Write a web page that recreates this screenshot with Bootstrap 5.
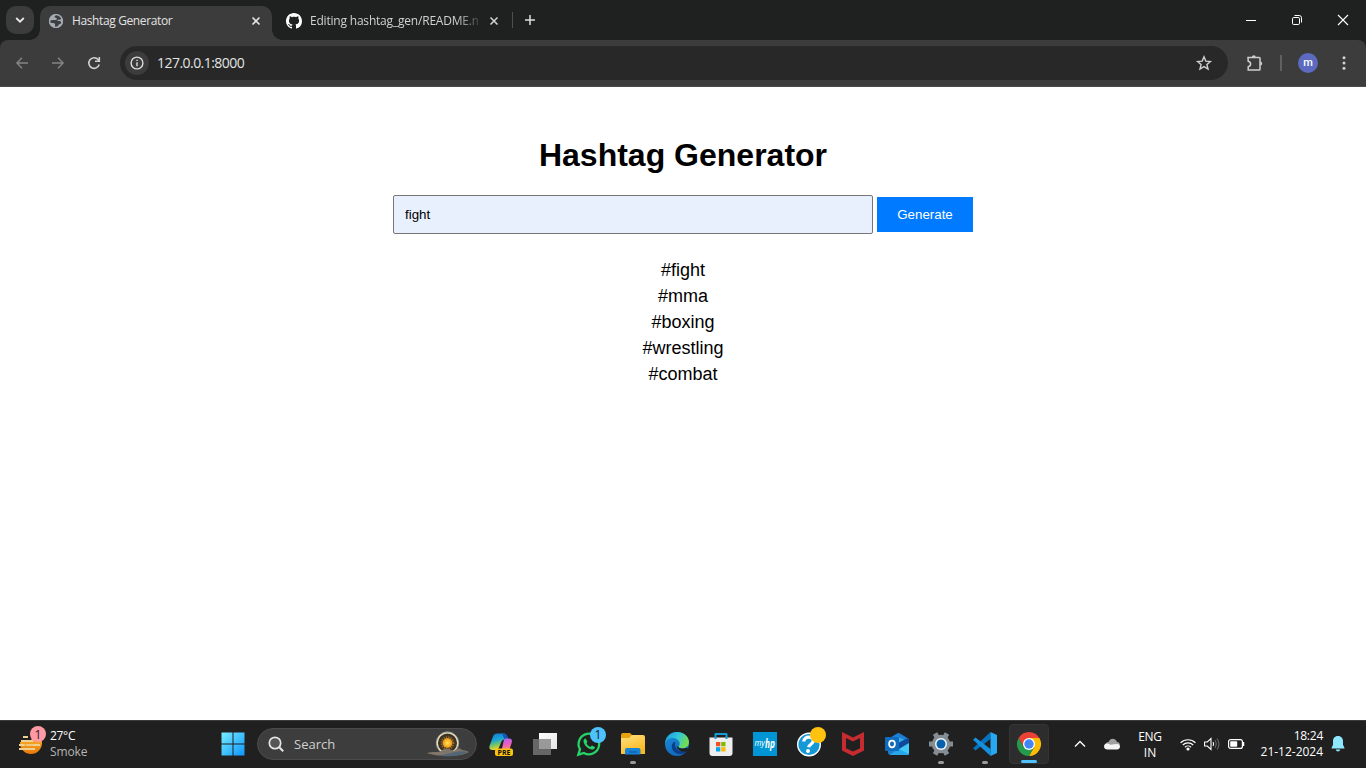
<!DOCTYPE html>
<html lang="en">
<head>
<meta charset="utf-8">
<meta name="viewport" content="width=device-width, initial-scale=1">
<title>Hashtag Generator</title>
<link href="https://cdn.jsdelivr.net/npm/bootstrap@5.3.0/dist/css/bootstrap.min.css" rel="stylesheet">
<style>
  body { width: 1366px; height: 768px; overflow: hidden; background: #fff; font-family: "Open Sans", "Noto Sans", sans-serif; }
  svg { display: block; flex: none; overflow: visible; }
  /* browser chrome */
  .tabstrip { height: 40px; background: #1f2120; color: #e3e3e3; font-size: 12px; padding-left: 6px; }
  .tab-menu { width: 28px; height: 28px; border-radius: 10px; background: #3c3c3c; margin: 6px 6px 0 0; }
  .tab-item { height: 34px; margin-top: 6px; width: 232px; padding: 0 8px 5px 8px; }
  .tab-active { background: #3c3c3c; border-radius: 10px 10px 0 0; }
  .tab-active::before, .tab-active::after { content: ""; position: absolute; bottom: 0; width: 10px; height: 10px; }
  .tab-active::before { left: -10px; background: radial-gradient(circle at 0 0, transparent 9.5px, #3c3c3c 10px); }
  .tab-active::after { right: -10px; background: radial-gradient(circle at 100% 0, transparent 9.5px, #3c3c3c 10px); }
  .tab-title { white-space: nowrap; overflow: hidden; letter-spacing: -.38px; line-height: 18px; }
  .tab-fade { width: 168px; color: #d0d0d0; letter-spacing: -.2px; -webkit-mask-image: linear-gradient(90deg, #000 146px, transparent 174px); mask-image: linear-gradient(90deg, #000 146px, transparent 174px); }
  .tab-rule { width: 1px; height: 16px; background: #4d4f4e; }
  .win-btn { width: 46px; }
  .strip-bg { background: #1f2120; }
  .toolbar { height: 47px; background: #3c3c3c; border-radius: 8px 8px 0 0; border-bottom: 1px solid #4b4b4b; }
  .tool-btn { width: 36px; height: 46px; }
  .omnibox { width: 1108px; height: 34px; border-radius: 17px; background: #282828; color: #e3e3e3; font-size: 14px; padding: 0 16px 0 5px; }
  .info-dot { width: 24px; height: 24px; border-radius: 50%; background: #3c3c3c; }
  .url { letter-spacing: -.54px; margin-left: 8px; padding-bottom: 2px; }
  .avatar { width: 20px; height: 20px; border-radius: 50%; background: #5c6bc0; color: #fff; font: 500 11px/20px Roboto, sans-serif; }
  /* page */
  .page { height: 633px; font-family: "Liberation Sans", Arial, sans-serif; color: #000; padding-top: 50px; }
  .page h1 { font-size: 32px; font-weight: 700; line-height: 37px; margin: 0 0 21px; }
  .keyword { width: 480px; height: 39px; padding: 10px 11px; border: 1px solid #767676; border-radius: 2px; background: #e8f0fe; color: #000; font-size: 13.333px; line-height: 17px; }
  .generate { width: 96px; height: 35px; border: 0; border-radius: 0; background: #007bff; color: #fff; font-size: 13.333px; line-height: 15px; padding: 10px 0; }
  .tags { font-size: 18px; line-height: 26px; margin: 23px 0 0; }
  /* taskbar */
  .taskbar { height: 48px; background: #202020; border-top: 1px solid #3b3b3b; padding-bottom: 1px; color: #fff; font-size: 12px; line-height: 16px; }
  .weather { width: 210px; padding-left: 17px; }
  .app { width: 44px; height: 46px; flex: none; }
  .app-open { width: 40px; height: 40px; margin: 0 2px; background: #2d2d2d; border: 1px solid #343434; border-radius: 4px; }
  .run-mark { left: 50%; bottom: 3px; width: 6px; height: 3px; margin-left: -3px; border-radius: 2px; background: #9a9a9a; }
  .app-open .run-mark { width: 16px; margin-left: -8px; bottom: 0; background: #4cc2ff; }
  .search { width: 220px; height: 32px; margin: 0 2px 0 3px; border-radius: 16px; background: #3d3d3d; border: 1px solid #4b4b4b; color: #d0d0d0; font-size: 13px; padding: 0 6px 0 10px; }
  .tray { width: 315px; }
</style>
</head>
<body class="d-flex flex-column m-0">

<header class="strip-bg">
  <div class="tabstrip d-flex">
    <div class="tab-menu d-flex align-items-center justify-content-center"><svg width="10" height="6" viewBox="0 0 10 6" fill="none" stroke="#e8e8e8" stroke-width="1.8"><path d="M1.2 1 5 4.7 8.8 1"/></svg></div>
    <div class="tab-item tab-active position-relative d-flex align-items-center">
      <svg width="16" height="16" viewBox="0 0 16 16"><circle cx="8" cy="8" r="7" fill="#a5abb2"/><path d="M9.500 1.500C8 2 6.300 2.800 6.600 4c.4 1 1.900.4 2.200 1.500.3 1.300-.9 1.700-2.300 1.600C4.500 7 3 7.200 1.700 7.800c.2 1 .4 1.700.8 2.200 1.500.3 2.300-.2 3.500.2 1.300.4 1.300 1.400 1 2.200-.2.700.1 1.300.4 2 2-.2 2.800-1.300 3.200-2.600.4-1 2.600-.6 2.700-2 .1-1.300-1.300-1.800-2.600-1.700-1 .1-1.600-.3-1.200-1 .5-.8 2.500.2 3.900-1.400C12.700 3.500 11.500 2 9.500 1.500z" fill="#3c3f42"/><circle cx="8" cy="8" r="6.400" fill="none" stroke="#a5abb2" stroke-width="1.400"/></svg>
      <span class="tab-title ms-2 flex-grow-1">Hashtag Generator</span>
      <svg class="me-1" width="8" height="8" viewBox="0 0 8 8" stroke="#e3e3e3" stroke-width="1.600"><path d="M.5.5l7 7M7.500.5l-7 7"/></svg>
    </div>
    <div class="tab-item d-flex align-items-center ms-2">
      <svg style="margin-left:-2px" width="16" height="16" viewBox="0 0 16 16" fill="#fff"><path d="M8 0C3.580 0 0 3.580 0 8c0 3.540 2.290 6.530 5.470 7.590.4.070.55-.17.55-.38 0-.19-.01-.82-.01-1.490-2.010.37-2.530-.49-2.690-.94-.09-.23-.48-.94-.82-1.130-.28-.15-.68-.52-.01-.53.63-.01 1.080.58 1.230.82.72 1.210 1.870.87 2.330.66.070-.52.28-.87.51-1.070-1.780-.2-3.640-.89-3.640-3.950 0-.87.31-1.590.82-2.150-.08-.2-.36-1.020.08-2.120 0 0 .67-.21 2.200.82.64-.18 1.320-.27 2-.27s1.360.09 2 .27c1.530-1.040 2.200-.82 2.200-.82.44 1.100.16 1.920.08 2.120.51.56.82 1.270.82 2.150 0 3.070-1.870 3.750-3.650 3.950.29.25.54.73.54 1.480 0 1.070-.01 1.930-.01 2.200 0 .21.15.46.55.38A8.010 8.010 0 0 0 16 8c0-4.420-3.580-8-8-8z"/></svg>
      <span class="tab-title tab-fade ms-2 flex-shrink-0">Editing hashtag_gen/README.md</span>
      <svg style="margin-left:12px" width="8" height="8" viewBox="0 0 8 8" stroke="#d5d5d5" stroke-width="1.500"><path d="M.5.5l7 7M7.500.5l-7 7"/></svg>
    </div>
    <div class="d-flex align-items-center">
      <div class="tab-rule"></div>
      <svg style="margin-left:12px" width="10" height="10" viewBox="0 0 10 10" stroke="#dedede" stroke-width="1.500"><path d="M5 0v10M0 5h10"/></svg>
    </div>
    <div class="d-flex ms-auto">
      <div class="win-btn d-flex align-items-center justify-content-center"><svg width="10" height="10" viewBox="0 0 10 10" stroke="#fff"><path d="M0 5.500h10"/></svg></div>
      <div class="win-btn d-flex align-items-center justify-content-center"><svg width="10" height="10" viewBox="0 0 10 10" fill="none" stroke="#fff"><rect x=".5" y="2.500" width="7" height="7" rx="1.300"/><path d="M2.500.5h4.700a2.300 2.300 0 0 1 2.300 2.300v4.700"/></svg></div>
      <div class="win-btn d-flex align-items-center justify-content-center"><svg width="10" height="10" viewBox="0 0 10 10" stroke="#fff" stroke-width="1.100"><path d="M0 0l10 10M10 0 0 10"/></svg></div>
    </div>
  </div>
  <div class="toolbar d-flex align-items-center">
    <div class="d-flex" style="padding-left:4px;width:120px">
      <div class="tool-btn d-flex align-items-center justify-content-center"><svg width="12" height="12" viewBox="0 0 12 12" fill="none" stroke="#858585" stroke-width="1.400"><path d="M12 6H1M6 .7.9 6 6 11.300"/></svg></div>
      <div class="tool-btn d-flex align-items-center justify-content-center"><svg width="12" height="12" viewBox="0 0 12 12" fill="none" stroke="#858585" stroke-width="1.400"><path d="M0 6h11M6 .7 11.100 6 6 11.300"/></svg></div>
      <div class="tool-btn d-flex align-items-center justify-content-center"><svg width="12" height="12" viewBox="0 0 12 12" fill="none" stroke="#d2d2d2" stroke-width="1.600"><path d="M11.200 7.500A5.300 5.300 0 1 1 10.100 2.500L11 3.600"/><path d="M11.300 0v4.300H7"/></svg></div>
    </div>
    <div class="omnibox d-flex align-items-center">
      <div class="info-dot d-flex align-items-center justify-content-center"><svg width="14" height="14" viewBox="0 0 14 14" fill="none" stroke="#dcdcdc" stroke-width="1.400"><circle cx="7" cy="7" r="5.900"/><path d="M7 6.200v4M7 3.700v1.400"/></svg></div>
      <span class="url flex-grow-1">127.0.0.1:8000</span>
      <svg width="16" height="16" viewBox="0 0 16 16" fill="none" stroke="#cfcfcf" stroke-width="1.400"><path d="M8 1.800l1.800 4.300 4.600.4-3.500 3 1.100 4.500L8 11.600 4 14l1.100-4.500-3.500-3 4.600-.4z"/></svg>
    </div>
    <svg style="margin-left:18px" width="18" height="18" viewBox="0 0 18 18" fill="none" stroke="#cfcfcf" stroke-width="1.500"><path d="M2 3.500h11.200q.8 0 .8.800v11q0 .8-.8.800H2.200v-3.300c3.200-.8 3.200-4.800 0-5.600z"/><path d="M5.900 3.200a1.900 1.900 0 0 1 3.800 0zM14.300 7.600a1.900 1.900 0 0 1 0 3.800z" fill="#cfcfcf" stroke="none"/></svg>
    <div style="width:2px;height:16px;margin-left:16px;background:#606060"></div>
    <div class="avatar text-center" style="margin-left:16px">m</div>
    <svg style="margin-left:24px" width="4" height="14" viewBox="0 0 4 14" fill="#d2d2d2"><circle cx="2" cy="1.700" r="1.500"/><circle cx="2" cy="7" r="1.500"/><circle cx="2" cy="12.300" r="1.500"/></svg>
  </div>
</header>

<main class="page text-center">
  <h1>Hashtag Generator</h1>
  <form class="d-flex align-items-center justify-content-center gap-1" onsubmit="return false">
    <input class="keyword" type="text" value="fight" aria-label="Keyword">
    <button class="btn generate" type="submit">Generate</button>
  </form>
  <ul class="tags list-unstyled">
    <li>#fight</li><li>#mma</li><li>#boxing</li><li>#wrestling</li><li>#combat</li>
  </ul>
</main>

<footer class="taskbar d-flex align-items-center">
  <div class="weather d-flex align-items-center">
    <svg width="30" height="32" viewBox="0 0 30 32"><defs><linearGradient id="sun" x2="0" y2="1"><stop stop-color="#ffc53d"/><stop offset="1" stop-color="#e87808"/></linearGradient></defs><circle cx="14" cy="15" r="11" fill="url(#sun)"/><path d="M0 2h14.500v12H0z" fill="#202020"/><g stroke="#edd092" stroke-width="2"><path d="M6 9h5M4 13h12M9 17h14M2 17h6M2 21h16"/></g><path d="M7 17h9" stroke="#f4bd5c" stroke-width="1"/><circle cx="21" cy="6" r="8" fill="#ff99a4"/><text x="21" y="10.500" text-anchor="middle" font-size="12" fill="#222">1</text></svg>
    <div style="margin-left:3px"><div style="letter-spacing:-.3px">27°C</div><div style="color:#b5b5b5;letter-spacing:-.1px">Smoke</div></div>
  </div>
  <div class="app d-flex align-items-center justify-content-center"><svg style="margin-left:1px" width="24" height="24" viewBox="0 0 24 24"><defs><linearGradient id="win" x1="0" y1="0" x2="24" y2="24" gradientUnits="userSpaceOnUse"><stop stop-color="#7aefff"/><stop offset="1" stop-color="#0a94ff"/></linearGradient></defs><path fill="url(#win)" d="M.5.5h11v11H.5zM12.500.5h11v11h-11zM.5 12.500h11v11H.5zM12.500 12.500h11v11h-11z"/></svg></div>
  <div class="search d-flex align-items-center">
    <svg width="16" height="16" viewBox="0 0 16 16" fill="none" stroke="#e5e5e5" stroke-width="1.700"><circle cx="7" cy="7" r="5.700" fill="#555"/><path d="M11.200 11.200l4 4" stroke-width="2"/></svg>
    <span style="margin-left:10px" class="flex-grow-1">Search</span>
    <svg width="44" height="26" viewBox="0 0 44 26"><defs><radialGradient id="glow"><stop stop-color="#ffe25a"/><stop offset=".6" stop-color="#fbb62a"/><stop offset="1" stop-color="#e08a18"/></radialGradient></defs><circle cx="21.500" cy="12" r="11.200" fill="#3b3529" stroke="#8fb4cc" stroke-width=".8"/><circle cx="21.500" cy="12" r="10.200" fill="none" stroke="#f3dcb0" stroke-width="1.300"/><circle cx="21.500" cy="12" r="6" fill="none" stroke="#a8701f" stroke-width="1.600" stroke-dasharray="1.200 1.160"/><circle cx="21.500" cy="12" r="5" fill="url(#glow)"/><path d="M1 22c6-2 10 0 14-2 4-4 9-2 13 0 4-3 6-3 8-1 3 0 5 1 7 2-8 5-32 5-42 1z" fill="#7f7568"/><path d="M15 25c4-3 9-2 14-4 4-1 9-1 13 0-6 4-16 5-27 4z" fill="#536675"/></svg>
  </div>
  <div class="app d-flex align-items-center justify-content-center"><svg width="24" height="24" viewBox="0 0 24 24"><defs><linearGradient id="copA" x2=".3" y2="1"><stop stop-color="#1675d8"/><stop offset=".45" stop-color="#18a5d5"/><stop offset=".75" stop-color="#83c75d"/><stop offset="1" stop-color="#f5d22f"/></linearGradient><linearGradient id="copB" x2=".2" y2="1"><stop stop-color="#a46bff"/><stop offset=".5" stop-color="#e65bc4"/><stop offset="1" stop-color="#ff8b69"/></linearGradient></defs><path d="M8 1.500h7q2 0 3 3l1 3h-4q-2 0-3 3l-2 5q-1 2.500-4 2.500H3.500q-4 0-3-4L4 4.500q1-3 4-3z" fill="url(#copA)"/><path d="M13 1.500h2.500q2 0 3 3l1 3h-4z" fill="#1656ba"/><path d="M16.500 6.500h4q3 0 2.300 4l-2 6q-1 3-4 3H9q3 0 4-3l1.500-7q.5-3 2-3z" fill="url(#copB)"/><rect x="6" y="16.500" width="18" height="7.500" rx="2" fill="#ffc20d"/><text x="15" y="23" text-anchor="middle" font-size="7" font-weight="700" fill="#111">PRE</text></svg></div>
  <div class="app d-flex align-items-center justify-content-center"><svg width="24" height="24" viewBox="0 0 24 24"><defs><linearGradient id="tv" x2="1" y2="1"><stop stop-color="#fff"/><stop offset="1" stop-color="#e4e4e4"/></linearGradient></defs><path d="M6 1h18v16H6z" fill="url(#tv)"/><path d="M0 7h18v16H0z" fill="#666"/><path d="M6 7h12v10H6z" fill="#999"/></svg></div>
  <div class="app d-flex align-items-center justify-content-center"><svg width="24" height="24" viewBox="0 0 24 24"><path d="M1.300 22.700 3 17.200A10.300 10.300 0 1 1 6.900 21z" fill="#202020" stroke="#25d366" stroke-width="2.300"/><path d="M8.500 6.500c-.6-.2-2 .8-2 2.600 0 4.200 5.200 8.600 8.800 8.400 1.800-.1 3-1.500 2.600-2.600l-3-1.500-1.400 1.500c-1.800-.7-3.200-2-4-3.700l1-1.400z" fill="#25d366"/><circle cx="21" cy="3" r="8" fill="#4cc2ff"/><text x="21" y="7.300" text-anchor="middle" font-size="12" fill="#202020">1</text></svg></div>
  <div class="app position-relative d-flex align-items-center justify-content-center"><svg width="24" height="24" viewBox="0 0 24 24"><defs><linearGradient id="fold" x2=".5" y2="1"><stop stop-color="#ffe082"/><stop offset="1" stop-color="#f8b91f"/></linearGradient></defs><path d="M0 3q0-2 2-2h7l2 2v4H0z" fill="#e6a30c"/><path d="M0 6h8l3-3h11q2 0 2 2v17H0z" fill="url(#fold)"/><path d="M4 22.500V18q0-2 2-2h11.500q2 0 2 2v4.500z" fill="#1683d8"/><path d="M8 20h8" stroke="#0f62ae" stroke-width="1.400"/></svg><i class="run-mark position-absolute"></i></div>
  <div class="app d-flex align-items-center justify-content-center"><svg width="24" height="24" viewBox="0 0 24 24"><defs><linearGradient id="edgeA" x2="1" y2=".4"><stop stop-color="#1894db"/><stop offset=".55" stop-color="#2fc6dc"/><stop offset="1" stop-color="#72dc55"/></linearGradient><linearGradient id="edgeB" x2=".5" y2="1"><stop stop-color="#1b8fdb"/><stop offset="1" stop-color="#1267bd"/></linearGradient></defs><circle cx="12" cy="12" r="12" fill="url(#edgeB)"/><path d="M0 11C.8 4.500 5.700 0 12 0c7 0 12 4.600 12 10 0 4-3 6.300-6.500 6.300-2 0-4-.5-4-1.500 0-.8 1.200-1.500 1.200-3.300C14.700 8.500 11.500 6 8 6c-3.500 0-7 2-8 5z" fill="url(#edgeA)"/><path d="M9 10c-3 2-3 7 .5 10 3 2.500 8 2.600 12 .2.600-.3 1.300-1.300.6-1.600-4 1.800-8.600 1-10.700-2C9.800 14.600 9.500 12 10.500 10z" fill="#0a3e86"/><path d="M14 15.500c1 1.200 5.500 1.300 8 .2l1.600 1.500-1.600 2C18 21 13 19 11.500 14z" fill="#202020"/></svg></div>
  <div class="app d-flex align-items-center justify-content-center"><svg width="24" height="24" viewBox="0 0 24 24"><path d="M.5 5.500h23V21q0 3-3 3h-17q-3 0-3-3z" fill="#eee"/><path d="M6.500 7V2h11v5" fill="none" stroke="#159bd7" stroke-width="2" stroke-linejoin="round"/><path fill="#f25022" d="M7 10h4.300v4.300H7z"/><path fill="#7fba00" d="M12.200 10h4.300v4.300h-4.300z"/><path fill="#00a4ef" d="M7 15.200h4.300v4.300H7z"/><path fill="#ffb900" d="M12.200 15.200h4.300v4.300h-4.300z"/></svg></div>
  <div class="app d-flex align-items-center justify-content-center"><svg width="24" height="24" viewBox="0 0 24 24"><path fill="#0096d6" d="M0 0h24v24H0z"/><text x="1.500" y="14.300" font-size="8.500" font-style="italic" fill="#fff" textLength="10.500" lengthAdjust="spacingAndGlyphs">my</text><text x="12" y="15.500" font-size="13" font-weight="700" font-style="italic" fill="#fff" textLength="10" lengthAdjust="spacingAndGlyphs">hp</text></svg></div>
  <div class="app d-flex align-items-center justify-content-center"><svg width="24" height="24" viewBox="0 0 24 24"><circle cx="12" cy="12.500" r="11.300" fill="#1499d6" stroke="#fff" stroke-width="1.400"/><path d="M6.800 9.500c.2-6 9.800-5.700 9.400-.4-.2 3-4.200 3.100-4.600 6.200" fill="none" stroke="#fff" stroke-width="3.200"/><circle cx="11" cy="19" r="2" fill="#fff"/><circle cx="21" cy="3" r="8" fill="#ffc20f"/></svg></div>
  <div class="app d-flex align-items-center justify-content-center"><svg width="24" height="24" viewBox="0 0 24 24"><path d="M1 0l11 5.500L23 0v18.500L12 24 1 18.500zM5 6v10.200L12 19.600l7-3.400V6L12 9.500z" fill="#c52b2f" fill-rule="evenodd"/></svg></div>
  <div class="app d-flex align-items-center justify-content-center"><svg width="24" height="24" viewBox="0 0 24 24"><path d="M3 7 12 1.500q1.500-1 3 0L24 7v14q0 2-2 2H6q-3 0-3-3z" fill="#1b7fd4"/><path d="M12 4.500l7 3-6 6z" fill="#39a9ee"/><path d="M14 10.500 23 6l1 1v5l-10 6z" fill="#0d4a9c"/><path d="M24 11v10q0 2-2 2H5l9-6z" fill="#42c8f5"/><path d="M5 23l9-6 9.500 5q-.7 1-1.500 1z" fill="#28a8ea"/><rect y="5" width="14" height="14" rx="1" fill="#0f6cbd"/><ellipse cx="7" cy="12" rx="2.900" ry="3.300" fill="none" stroke="#fff" stroke-width="1.700"/></svg></div>
  <div class="app position-relative d-flex align-items-center justify-content-center"><svg width="24" height="24" viewBox="0 0 24 24"><circle cx="12" cy="12" r="9.200" fill="#858d94"/><g stroke="#858d94" stroke-width="5"><path d="M6 1.600 18 22.400M18 1.600 6 22.400M0 12h24"/></g><circle cx="12" cy="12" r="6" fill="#f3f6f8"/><circle cx="12" cy="12" r="4.500" fill="#0861ad"/></svg><i class="run-mark position-absolute"></i></div>
  <div class="app position-relative d-flex align-items-center justify-content-center"><svg width="24" height="24" viewBox="0 0 24 24"><path d="M0 16.200 17.500 0v7L2.500 18.500z" fill="#0873bd"/><path d="M0 7.800 2.500 5.500 17.500 17v7z" fill="#1590df"/><path d="M17.500 0 24 3v18l-6.500 3z" fill="#29a8f2"/></svg><i class="run-mark position-absolute"></i></div>
  <div class="app app-open position-relative d-flex align-items-center justify-content-center"><svg width="24" height="24" viewBox="0 0 24 24"><path d="M12 12V6h10.400A12 12 0 0 1 12 24l5.200-9z" fill="#fbbc04"/><path d="M12 12l-5.200 3L1.600 6A12 12 0 0 0 12 24l5.200-9z" fill="#249b4c"/><path d="M12 6h10.400A12 12 0 0 0 1.600 6l5.200 9z" fill="#ea4335"/><circle cx="12" cy="12" r="6" fill="#fff"/><circle cx="12" cy="12" r="4.700" fill="#4285f4"/></svg><i class="run-mark position-absolute"></i></div>
  <div class="tray d-flex align-items-center">
    <svg style="margin-left:23px" width="12" height="8" viewBox="0 0 12 8" fill="none" stroke="#fff" stroke-width="1.400"><path d="M1 6.500l5-5 5 5"/></svg>
    <svg style="margin-left:18px" width="16" height="12" viewBox="0 0 16 12"><path d="M1 8c0-3 2-4 3.500-4C6-.5 11.500-.5 13 4c2 .2 3 1.600 3 3.500L9 10z" fill="#a0a0a0"/><path d="M0 8.500c0-2 1.500-3 3-3 1.500 0 2.500.8 3.200 1.200L13 6c2 .2 3 1.300 3 2.800S14.500 11.500 13 11.500H3.500C1.500 11.500 0 10.500 0 8.500z" fill="#f5f5f5"/></svg>
    <div class="text-center" style="width:60px;padding-top:1px"><div style="letter-spacing:-.3px">ENG</div><div>IN</div></div>
    <svg width="16" height="13" viewBox="0 0 16 13" fill="none" stroke="#fff" stroke-width="1.200"><path d="M.6 4.800a10.500 10.500 0 0 1 14.800 0M2.800 7a7.400 7.400 0 0 1 10.400 0M5 9.200a4.300 4.300 0 0 1 6 0"/><circle cx="8" cy="11" r="1" fill="#fff"/></svg>
    <svg style="margin-left:8px" width="16" height="14" viewBox="0 0 16 14" fill="none" stroke="#fff" stroke-width="1.100"><path d="M.6 5h2.700L7 1.500v11L3.300 9H.6z"/><path d="M9 5q1.300 2 0 4"/><path d="M11 3.300q2.500 3.700 0 7.400M13 1.500q4 5.500 0 11" stroke="#666"/></svg>
    <svg style="margin-left:8px" width="17" height="10" viewBox="0 0 17 10"><rect x=".6" y=".6" width="13.800" height="8.800" rx="2" fill="none" stroke="#fff" stroke-width="1.200"/><rect x="2.200" y="2.200" width="7" height="5.600" rx=".8" fill="#fff"/><path d="M15.500 3v4" stroke="#fff" stroke-width="1.500"/></svg>
    <div class="text-end" style="width:78px"><div style="letter-spacing:-.25px">18:24</div><div style="letter-spacing:-.02px">21-12-2024</div></div>
    <svg style="margin-left:8px" width="14" height="16" viewBox="0 0 14 16" fill="#8de8ff"><path d="M7 0C3.700 0 2 2.300 2 5.200v3.600L.5 12q0 .6.600.6h11.800q.6 0 .6-.6L12 8.800V5.200C12 2.300 10.300 0 7 0zM4.700 13.500h4.600Q8.800 15.500 7 15.500T4.700 13.500z"/></svg>
  </div>
</footer>
<script src="https://cdn.jsdelivr.net/npm/bootstrap@5.3.0/dist/js/bootstrap.bundle.min.js"></script>
</body>
</html>
